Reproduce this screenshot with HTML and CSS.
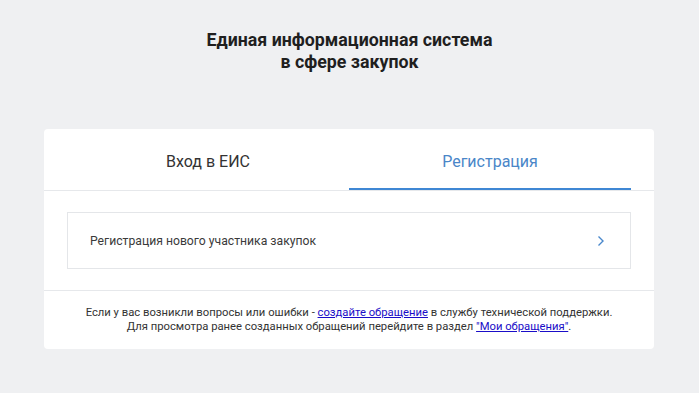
FILE: index.html
```html
<!DOCTYPE html>
<html lang="ru">
<head>
    <meta charset="UTF-8">
    <meta name="viewport" content="width=device-width, initial-scale=1.0">
    <title>ЕИС</title>
    <link rel="stylesheet" href="styles.css">
</head>
<body>
    <h1 class="title">Единая информационная система<br>в сфере закупок</h1>

    <div class="card">
        <div class="tabs">
            <div class="tab">Вход в ЕИС</div>
            <div class="tab active">Регистрация</div>
        </div>

        <div class="content">
            <a class="item" href="#">
                <span>Регистрация нового участника закупок</span>
                <svg class="chevron" width="8" height="12" viewBox="0 0 8 12">
                    <path d="M1.5 1.5 L6 6 L1.5 10.5" fill="none" stroke="#4a88cc" stroke-width="1.4"/>
                </svg>
            </a>
        </div>

        <div class="footer">
            Если у вас возникли вопросы или ошибки - <a href="#">создайте обращение</a> в службу технической поддержки.<br>
            Для просмотра ранее созданных обращений перейдите в раздел <a href="#">"Мои обращения"</a>.
        </div>
    </div>
</body>
</html>
```

FILE: styles.css
```css
body {
    font-family: Roboto, "Noto Sans", sans-serif;
    margin: 0;
    padding: 0;
    background-color: #eff0f2;
    color: #333;
}

.title {
    margin: 0;
    padding-top: 29px;
    font-size: 17.8px;
    line-height: 22px;
    font-weight: 700;
    text-align: center;
    color: #1f1f1f;
}

.card {
    width: 610px;
    margin: 56px 0 0 44px;
    background: #fff;
    border-radius: 4px;
}

.tabs {
    display: flex;
    padding: 0 23px;
    border-bottom: 1px solid #e6e8eb;
}

.tab {
    flex: 1;
    text-align: center;
    font-size: 16px;
    line-height: 20px;
    padding: 23px 0 16px;
    color: #333;
    border-bottom: 2px solid transparent;
}

.tab.active {
    color: #4a86c8;
    border-bottom-color: #3f87d4;
}

.content {
    padding: 21px 23px 21px;
    border-bottom: 1px solid #e6e8eb;
}

.item {
    display: flex;
    align-items: center;
    justify-content: space-between;
    height: 55px;
    padding: 0 25px 0 22px;
    border: 1px solid #e4e6e9;
    color: #3a3a3a;
    font-size: 12.2px;
    text-decoration: none;
}

.footer {
    padding: 15px 0 15px;
    text-align: center;
    font-size: 11.25px;
    line-height: 14px;
    color: #333;
}

.footer a {
    color: #1a0dc8;
    text-decoration: underline;
}
```
